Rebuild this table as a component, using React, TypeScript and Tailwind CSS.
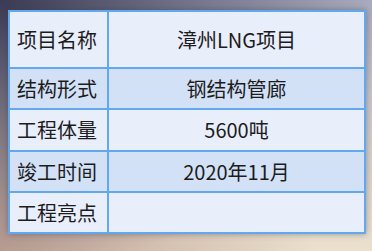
const rows = [
  { label: "项目名称", value: "漳州LNG项目", tall: true },
  { label: "结构形式", value: "钢结构管廊" },
  { label: "工程体量", value: "5600吨" },
  { label: "竣工时间", value: "2020年11月" },
  { label: "工程亮点", value: "" },
];

export default function App() {
  return (
    <div className="w-[372px] h-[251px] overflow-hidden bg-[radial-gradient(ellipse_at_0%_0%,rgba(52,52,78,0.95),rgba(52,52,78,0)_75%),radial-gradient(ellipse_at_0%_100%,rgba(160,120,110,0.6),rgba(160,120,110,0)_60%),linear-gradient(to_bottom,#b0b1c4,#ebe0cd)] pl-[8px] pt-[10px] font-['Noto_Sans_CJK_SC',sans-serif]">
      <div className="w-[358px] grid grid-cols-[97px_255px] gap-[2px] p-[2px] bg-[#62a8ee] shadow-[0_0_6px_rgba(60,60,80,0.45)]">
        {rows.map((r, i) => {
          const bg = i % 2 === 1 ? "bg-[#d3e1f7]" : "bg-[#e9eefb]";
          const h = r.tall ? "h-[55px]" : i === 2 ? "h-[40px]" : "h-[39px]";
          return (
            <div key={r.label} className="contents">
              <div className={`${bg} ${h} flex items-center pl-[7px] text-[20px] text-[#1c1c1c]`}>
                {r.label}
              </div>
              <div className={`${bg} ${h} flex items-center justify-center text-[20px] text-[#1c1c1c]`}>
                {r.value}
              </div>
            </div>
          );
        })}
      </div>
    </div>
  );
}
